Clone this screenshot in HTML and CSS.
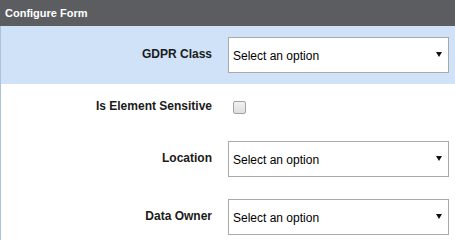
FILE: index.html
```html
<!DOCTYPE html>
<html>
<head>
<meta charset="utf-8">
<link rel="stylesheet" href="styles.css">
</head>
<body>
<div class="header">Configure Form</div>
<div class="form">
  <div class="row row-select highlight">
    <label class="label">GDPR Class</label>
    <div class="select-wrap">
      <select class="select"><option>Select an option</option></select>
      <svg class="arrow" width="6" height="5" viewBox="0 0 6 5"><polygon points="0,0 6,0 3,5" fill="#111"/></svg>
    </div>
  </div>
  <div class="row row-check">
    <label class="label">Is Element Sensitive</label>
    <div class="check-wrap"><input type="checkbox" class="check"></div>
  </div>
  <div class="row row-select">
    <label class="label">Location</label>
    <div class="select-wrap">
      <select class="select"><option>Select an option</option></select>
      <svg class="arrow" width="6" height="5" viewBox="0 0 6 5"><polygon points="0,0 6,0 3,5" fill="#111"/></svg>
    </div>
  </div>
  <div class="row row-select">
    <label class="label">Data Owner</label>
    <div class="select-wrap">
      <select class="select"><option>Select an option</option></select>
      <svg class="arrow" width="6" height="5" viewBox="0 0 6 5"><polygon points="0,0 6,0 3,5" fill="#111"/></svg>
    </div>
  </div>
</div>
</body>
</html>
```
FILE: styles.css
```css
html, body {
  margin: 0;
  padding: 0;
  background: #ffffff;
  font-family: "Liberation Sans", Arial, sans-serif;
}
.header {
  height: 26px;
  line-height: 26px;
  background: #5c5d61;
  color: #ffffff;
  font-size: 11px;
  font-weight: bold;
  padding-left: 5px;
}
.form {
  border-left: 1px solid #a9c3dc;
}
.row {
  display: grid;
  grid-template-columns: 211px 221px;
  column-gap: 16px;
  align-items: center;
}
.row-select {
  padding: 11px 0 11px;
}
.row-check {
  height: 46px;
}
.highlight {
  background: #cfe2f7;
}
.label {
  text-align: right;
  font-size: 12px;
  font-weight: bold;
  color: #1a1a1a;
  padding-bottom: 3px;
}
.select-wrap {
  position: relative;
  height: 36px;
}
.select {
  -webkit-appearance: none;
  appearance: none;
  box-sizing: border-box;
  width: 221px;
  height: 36px;
  margin: 0;
  border: 1px solid #a9a9a9;
  border-radius: 0;
  background: #ffffff;
  padding: 1px 4px 0;
  font-family: "Liberation Sans", Arial, sans-serif;
  font-size: 12px;
  color: #000000;
}
.arrow {
  position: absolute;
  right: 7px;
  top: 15px;
}
.check-wrap {
  display: flex;
  align-items: center;
  padding-left: 5px;
}
.check {
  -webkit-appearance: none;
  appearance: none;
  width: 13px;
  height: 13px;
  margin: 0;
  box-sizing: border-box;
  border: 1px solid #a3a3a3;
  border-radius: 2px;
  background: linear-gradient(#f2f2f2, #dedede);
}
```
